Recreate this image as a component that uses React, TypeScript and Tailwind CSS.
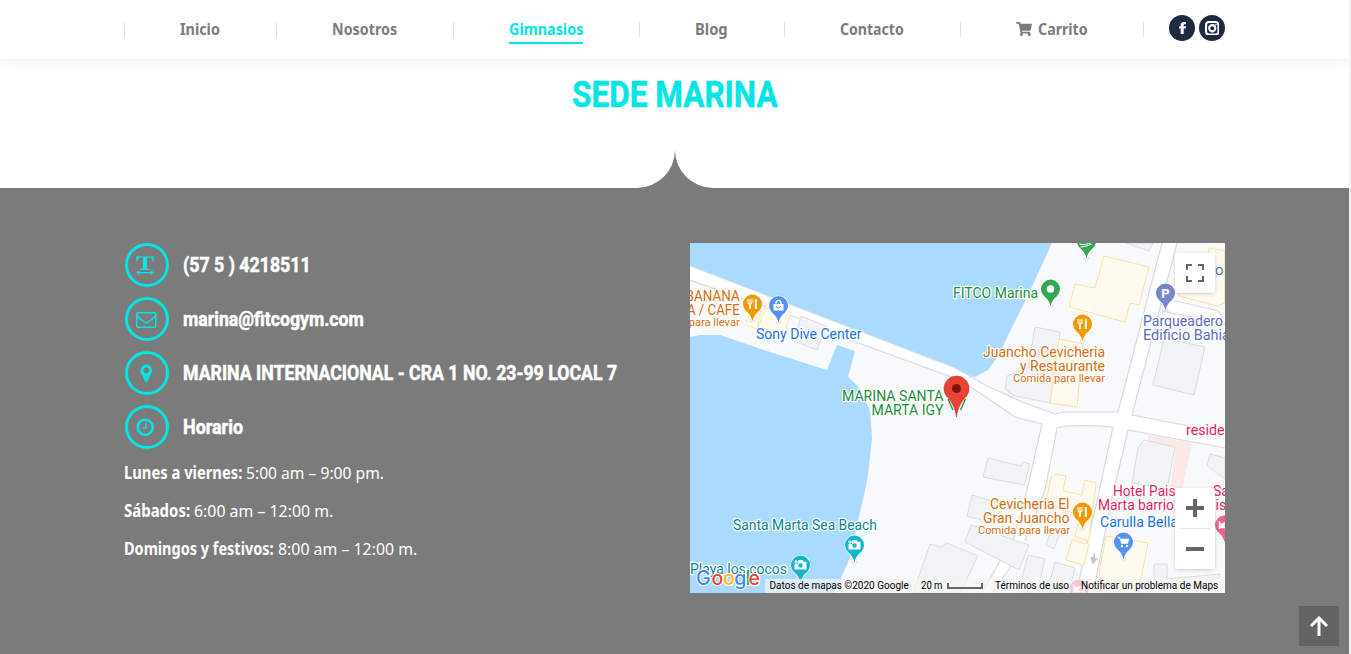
import { useLayoutEffect, useRef, useState, type ReactNode } from 'react';

const CLOCK =
  'M1024 544v448q0 14-9 23t-23 9h-320q-14 0-23-9t-9-23v-64q0-14 9-23t23-9h224v-352q0-14 9-23t23-9h64q14 0 23 9t9 23zm416 352q0-148-73-273t-198-198-273-73-273 73-198 198-73 273 73 273 198 198 273 73 273-73 198-198 73-273zm224 0q0 209-103 385.5t-279.5 279.5-385.5 103-385.5-103-279.5-279.5-103-385.5 103-385.5 279.5-279.5 385.5-103 385.5 103 279.5 279.5 103 385.5z';
const MARKER =
  'M1152 640q0-106-75-181t-181-75-181 75-75 181 75 181 181 75 181-75 75-181zm256 0q0 109-33 179l-364 774q-16 33-47.5 52t-67.5 19-67.5-19-46.5-52l-365-774q-33-70-33-179 0-212 150-362t362-150 362 150 150 362z';
const ENVELOPE =
  'M1664 1504v-768q-32 36-69 66-268 206-426 338-51 43-83 67t-86.5 48.5-102.5 24.5h-2q-48 0-102.5-24.5t-86.5-48.5-83-67q-158-132-426-338-37-30-69-66v768q0 13 9.5 22.5t22.5 9.5h1472q13 0 22.5-9.5t9.5-22.5zm0-1051v-24.5l-.5-13-3-12.5-5.5-9-9-7.5-14-2.5h-1472q-13 0-22.5 9.5t-9.5 22.5q0 168 147 284 193 152 401 317 6 5 35 29.5t46 37.5 44.5 31.5 50.5 27.5 43 9h2q20 0 43-9t50.5-27.5 44.5-31.5 46-37.5 35-29.5q208-165 401-317 54-43 100.5-115.5t46.5-131.5zm128-37v1088q0 66-47 113t-113 47h-1472q-66 0-113-47t-47-113v-1088q0-66 47-113t113-47h1472q66 0 113 47t47 113z';

/** A single line of text, condensed or widened to the given width. */
function Fit({ w, children, className = '' }: { w: number; children: ReactNode; className?: string }) {
  const ref = useRef<HTMLSpanElement>(null);
  const [k, setK] = useState(1);
  useLayoutEffect(() => {
    if (ref.current) setK(w / ref.current.offsetWidth);
  }, [w]);
  return (
    <span className={`block ${className}`} style={{ width: w }}>
      <span ref={ref} className="inline-block origin-left whitespace-nowrap" style={{ transform: `scaleX(${k})` }}>
        {children}
      </span>
    </span>
  );
}

function CartIcon() {
  return (
    <svg viewBox="0 0 576 512" className="h-[14px] w-[16px] fill-[#7b7b7b]">
      <path d="M528.12 301.319l47.273-208C578.806 78.301 567.391 64 551.99 64H159.208l-9.166-44.81C147.758 8.021 137.93 0 126.529 0H24C10.745 0 0 10.745 0 24v16c0 13.255 10.745 24 24 24h69.883l70.248 343.435C147.325 417.1 136 435.222 136 456c0 30.928 25.072 56 56 56s56-25.072 56-56c0-15.674-6.447-29.835-16.824-40h209.647C430.447 426.165 424 440.326 424 456c0 30.928 25.072 56 56 56s56-25.072 56-56c0-22.172-12.888-41.332-31.579-50.405l5.517-24.276c3.413-15.018-8.002-29.319-23.403-29.319H218.117l-6.545-32h293.145c11.206 0 20.92-7.754 23.403-18.681z" />
    </svg>
  );
}

const nav = [
  { label: 'Inicio', slot: 'w-[152px]', w: 40 },
  { label: 'Nosotros', slot: 'w-[177px]', w: 65 },
  { label: 'Gimnasios', slot: 'w-[186px]', w: 74, active: true },
  { label: 'Blog', slot: 'w-[145px]', w: 33 },
  { label: 'Contacto', slot: 'w-[176px]', w: 64 },
  { label: 'Carrito', slot: 'w-[183px]', w: 50, cart: true },
];

function Header() {
  return (
    <header className="relative z-10 flex h-[59px] items-center bg-white pl-[124px] shadow-[0_0_15px_1px_rgba(0,0,0,0.07)]">
      <nav className="flex items-center">
        {nav.map((n) => (
          <a key={n.label} className={`flex h-[15px] items-center border-l border-[#dedede] pl-[55px] ${n.slot}`}>
            {n.cart && (
              <span className="mr-[6px] mb-[2px]">
                <CartIcon />
              </span>
            )}
            <span
              className={
                n.active
                  ? 'border-b-2 border-[#00e5e5] pb-[1px] text-[#00e5e5]'
                  : 'mb-[2px] text-[#7b7b7b]'
              }
            >
              <Fit w={n.w} className="text-[16.5px] leading-[25px] font-bold">
                {n.label}
              </Fit>
            </span>
          </a>
        ))}
      </nav>
      <div className="mb-[3px] flex items-center gap-1">
        <span className="-mr-px mt-[2px] h-[15px] w-[23px] border-l border-[#dedede]" />
        <span className="flex size-[26px] items-center justify-center rounded-full bg-[#1f2a40]">
          <svg viewBox="0 0 7 12" className="h-3 w-[7px] fill-white">
            <path d="M1.700 12V6.600H0V4.300h1.700V3C1.700 1 3 0 5 0h2v2.200H5.700c-.8 0-1 .4-1 1v1.100H7l-.3 2.300h-2V12z" />
          </svg>
        </span>
        <span className="flex size-[26px] items-center justify-center rounded-full bg-[#1f2a40]">
          <svg viewBox="0 0 14 14" className="size-[14.5px] fill-none stroke-white">
            <rect x="1" y="1" width="12" height="12" rx="2.800" strokeWidth="2" />
            <circle cx="7" cy="7" r="3" strokeWidth="2" />
            <circle cx="10.500" cy="3.500" r=".5" strokeWidth=".8" />
          </svg>
        </span>
      </div>
    </header>
  );
}

function TextWidthIcon() {
  return (
    <svg viewBox="0 0 18 19" className="mr-[4px] h-[19px] w-[18px] fill-[#00e5e5]">
      <path d="M.3 0h1l.7.5h14l.7-.5h.9v5.2h-1.1c-.4-2-.9-3.2-2-3.500-1-.2-2.300-.2-3.500-.1v9.800c0 1 .5 1.300 2.700 1.700v1H4.300v-1c2.200-.4 2.700-.7 2.700-1.700V1.600c-1.200-.1-2.500-.1-3.500.1-1.100.3-1.600 1.500-2 3.500H.3z" />
      <path d="M0 16.600 3.300 14v1.900h11.400V14l3.300 2.600-3.300 2.400v-1.700H3.300V19z" />
    </svg>
  );
}

function Glyph({ d, shift = 'mr-[1.5px]' }: { d: string; shift?: string }) {
  return (
    <svg viewBox="0 0 1792 1792" className={`size-[20.5px] fill-[#00e5e5] ${shift}`}>
      <path d={d} />
    </svg>
  );
}

const contacts = [
  { icon: <TextWidthIcon />, text: '(57 5 ) 4218511', w: 127 },
  { icon: <Glyph d={ENVELOPE} />, text: 'marina@fitcogym.com', w: 180 },
  { icon: <Glyph d={MARKER} />, text: 'MARINA INTERNACIONAL - CRA 1 NO. 23-99 LOCAL 7', w: 433 },
  { icon: <Glyph d={CLOCK} shift="mr-[4px]" />, text: 'Horario', w: 59 },
];

const hours = [
  { day: 'Lunes a viernes:', time: '5:00 am – 9:00 pm.', dw: 118, tw: 138 },
  { day: 'Sábados:', time: '6:00 am – 12:00 m.', dw: 66, tw: 139 },
  { day: 'Domingos y festivos:', time: '8:00 am – 12:00 m.', dw: 150, tw: 139 },
];

type Label = { t: string; x: number; y: number; c: string; w?: number; s?: number; end?: boolean };

const ORANGE = '#d56e0c';
const GREEN = '#1e8e3e';
const PINK = '#e01e62';
const labels: Label[] = [
  { t: 'BANANA', x: 49.7, y: 58, c: ORANGE, end: true, w: 54 },
  { t: 'LA / CAFE', x: 49.7, y: 72, c: ORANGE, end: true, w: 60 },
  { t: 'para llevar', x: 49.7, y: 82.5, c: ORANGE, end: true, s: 11, w: 51 },
  { t: 'Sony Dive Center', x: 66, y: 96, c: '#1a73e8', w: 105.5 },
  { t: 'MARINA SANTA', x: 152, y: 158, c: GREEN, w: 101.5 },
  { t: 'MARTA IGY', x: 181.5, y: 172, c: GREEN, w: 72 },
  { t: 'FITCO Marina', x: 263, y: 55, c: GREEN, w: 85 },
  { t: 'Juancho Cevicheria', x: 293, y: 114, c: ORANGE, w: 122 },
  { t: 'y Restaurante', x: 330, y: 128, c: ORANGE, w: 85 },
  { t: 'Comida para llevar', x: 323, y: 139, c: ORANGE, s: 11, w: 92 },
  { t: 'Parqueadero', x: 453, y: 83, c: '#5c6bc0', w: 80 },
  { t: 'Edificio Bahia', x: 453, y: 97, c: '#5c6bc0', w: 87 },
  { t: 'ro', x: 520, y: 32, c: '#5b7b8e', w: 13.5 },
  { t: 'Santa Marta Sea Beach', x: 43, y: 287, c: '#0c8591', w: 144 },
  { t: 'Playa los cocos', x: 0, y: 331, c: '#0c8591', w: 97 },
  { t: 'Cevicheria El', x: 300, y: 266, c: ORANGE, w: 79.5 },
  { t: 'Gran Juancho', x: 293, y: 280, c: ORANGE, w: 86.5 },
  { t: 'Comida para llevar', x: 288, y: 291, c: ORANGE, s: 11, w: 92 },
  { t: 'Hotel Pais', x: 423, y: 253, c: PINK, w: 62.5 },
  { t: 'Sa', x: 523, y: 253, c: PINK },
  { t: 'Marta barrio', x: 408, y: 267, c: PINK, w: 76 },
  { t: 'is', x: 525.5, y: 267, c: PINK },
  { t: 'Carulla Bella', x: 410, y: 284, c: '#1a73e8', w: 78 },
  { t: 'reside', x: 496, y: 192, c: PINK, w: 38.5 },
];

function Pin({ x, y, c, children }: { x: number; y: number; c: string; children?: ReactNode }) {
  return (
    <g transform={`translate(${x} ${y})`}>
      <ellipse cx="0" cy="17" rx="3" ry="1.6" fill="#e3e5e8" />
      <path
        d="M0 17.500C-1.200 12-3.500 9.800-6.500 7A9.500 9.500 0 1 1 6.500 7C3.500 9.800 1.200 12 0 17.500z"
        fill={c}
        stroke="#fff"
        strokeWidth="1.200"
        paintOrder="stroke"
      />
      {children}
    </g>
  );
}

const Fork = () => (
  <g fill="none" stroke="#fff" strokeWidth="1.100">
    <path d="M-4.500-5v3.500q0 1.500 2 1.500t2-1.500V-5M-2.500-5V5" />
    <path d="M3.300-5V5" strokeWidth="2" />
    <path d="M-2.500 0V5" strokeWidth="1.800" />
  </g>
);
const Camera = () => (
  <g>
    <path d="M-2-5h4l1.200 1.700H6V4.500H-6V-1h3.500z" fill="#fff" />
    <circle cx="0" cy=".5" r="2.200" fill="#12b5cb" />
    <path d="M-6.500-3h4M-4.500-5v4" stroke="#fff" strokeWidth="1" />
  </g>
);
const Bed = () => <path d="M-5-4v8M-5 2.500H5V4M5 2.500V-2H-.5v4M-3.500-1h2v2h-2z" fill="none" stroke="#fff" strokeWidth="1.400" />;

function MapDrawing() {
  return (
    <svg viewBox="0 0 535 350" className="block h-[350px] w-[535px]">
      <rect width="535" height="350" fill="#f8f9fb" />
      {/* sea */}
      <g fill="#aadaff">
        <path d="M0 0H362L338 52 308 113 298 127 285 134 278 132 265 125 0 23z" />
        <path d="M0 94 10 92 30 92 83 110 137 127 147 102 165 108 158 134 167 142 172 150 180 167 182 195 178 232 175 248 168 278 160 315 144 350H0z" />
      </g>
      {/* streets */}
      <g fill="#fff">
        <path d="M0 23 265 125 278 132 295 142 332 159 365 171 375 169H428L472 0H487L442 172 535 190V205L438 187 422 255 403 350H386L407 258 423 184 375 183 367 185 355 247 335 298 323 298 337 247 352 181 325 174 290 150 267 136 0 37z" />
        <path d="M478 54 525 66Q534 68 534 76L482 68 474 66z" />
        <path d="M310 318 322 322 302 350H292z" />
      </g>
      <g fill="none" stroke="#d7d9df" strokeWidth="1.200">
        <path d="M0 37 108 75 160 97 267 136 290 150 325 174 352 181 337 247 323 298" />
        <path d="M265 125 278 132 295 142 332 159 365 171 375 169H428L472 0" />
        <path d="M487 0 442 172 535 190M535 205 438 187 422 255 403 350M386 350 407 258 423 184Q380 181 367 185L355 247 335 298" />
        <path d="M482 57 525 67Q534 70 532 78M472 68 535 81M310 318 292 350M322 322 302 350" />
      </g>
      <path d="M0 23 265 125" stroke="#d9e2ea" fill="none" />
      <path d="M458 192 502 200 492 245 480 245 486 203 458 199z" fill="#fce8e6" />
      {/* buildings */}
      <g fill="#f1f3f4" stroke="#dadce0">
        <path d="M111 73 136 83 127 107 104 98z" />
        <path d="M436 0 459 8 463 0z" />
        <path d="M345 84 370 89 361 160 325 153 315 146 317 133 338 125z" />
        <path d="M474 95 515 104 504 152 463 142z" />
        <path d="M454 197 485 204 477 246 442 240 448 205z" />
        <path d="M520 211 535 215V236L517 223z" />
        <path d="M298 215 331 223 333 219 340 221 334 242 293 234z" />
        <path d="M282 252 315 262 303 280 277 273z" />
        <path d="M281 282 339 302 329 327 275 299z" />
        <path d="M240 301 251 304 257 300 288 313 270 350H223z" />
        <path d="M338 312 355 316 347 350H328z" />
        <path d="M365 319 385 325 379 350H357z" />
        <path d="M362 285 372 285 364 306 356 302z" />
        <path d="M464 321H477V336L530 331 524 344H464z" />
      </g>
      <g fill="#fffaf0" stroke="#fde09a">
        <path d="M414 13 459 24 449 62 440 60 435 79 379 64 385 41 405 45z" />
        <path d="M369 96 393 101 387 164 360 160z" />
        <path d="M361 234 365 232 366 231 376 233 373 248 392 252 395 237 406 240 399 298 385 294 390 273 356 259z" />
        <path d="M382 297 399 301 394 322 376 317z" />
        <path d="M416 293 458 300 448 350H414L409 330z" />
        <path d="M519 5 535 8V60L527 63 489 53 495 30 517 30z" />
        <path d="M62 65 71 68 67 86 55 82z" strokeDasharray="3 1" />
        <path d="M77 60 101 69 95 90 68 84z" strokeDasharray="3 1" />
      </g>
      <path d="M405 310v5h3l-5 7-3-8h3l1-4z" fill="#c5c9d6" />
      <Pin x={62.5} y={61} c="#f29900"><Fork /></Pin>
      <Pin x={88.5} y={62.500} c="#5491f5">
        <path d="M-5-1.500H5V5H-5z" fill="#fff" />
        <path d="M-2.500-1v-1.500a2.500 2.500 0 0 1 5 0V-1" fill="none" stroke="#fff" strokeWidth="1.300" />
        <path d="M-2 .5a2 2 0 0 0 4 0" fill="none" stroke="#5491f5" />
      </Pin>
      <Pin x={360.5} y={46} c="#34a853"><circle r="3.800" fill="#fff" /></Pin>
      <Pin x={396.5} y={-2} c="#34a853">
        <path d="M-7 3q5 2 13-2M-6 6q6 0 11-3" stroke="#fff" fill="none" />
      </Pin>
      <Pin x={392.5} y={81} c="#f29900"><Fork /></Pin>
      <Pin x={475.5} y={50} c="#7986cb">
        <text x="0" y="5" textAnchor="middle" fontSize="13" fontWeight="700" fill="#fff">P</text>
      </Pin>
      <Pin x={164.5} y={302} c="#12b5cb"><Camera /></Pin>
      <Pin x={110.5} y={322} c="#12b5cb"><Camera /></Pin>
      <Pin x={392.5} y={269} c="#f29900"><Fork /></Pin>
      <Pin x={433.5} y={299} c="#5491f5">
        <path d="M-6-5h2l2 6.500H4L5.500-3H-3z" fill="#fff" stroke="#fff" strokeWidth=".6" />
        <circle cx="-1.500" cy="4" r="1.200" fill="#fff" />
        <circle cx="3.500" cy="4" r="1.200" fill="#fff" />
      </Pin>
      <Pin x={534.5} y={282} c="#f06292"><Bed /></Pin>
      <Pin x={389} y={346} c="#f06292"><Bed /></Pin>
      <g stroke="#fff" strokeWidth="2.500" strokeLinejoin="round" paintOrder="stroke">
        {labels.map((l, i) => (
          <text
            key={i}
            x={l.x}
            y={l.y}
            fill={l.c}
            fontSize={l.s ?? 14}
            textAnchor={l.end ? 'end' : 'start'}
            textLength={l.w}
            lengthAdjust="spacingAndGlyphs"
          >
            {l.t}
          </text>
        ))}
      </g>
      <path d="M258 156l5 11M275.500 156l-5 11" stroke="#1e8e3e" strokeWidth="1.300" />
      <path
        d="M266.500 174C265 163 261 158.500 256.500 153A12.500 12.500 0 1 1 276.500 153C272 158.500 268 163 266.500 174z"
        fill="#ea4335"
        stroke="#c5372c"
        strokeWidth=".6"
      />
      <circle cx="266.500" cy="145.500" r="4.500" fill="#811411" />
    </svg>
  );
}

function GoogleLogo() {
  return (
    <svg viewBox="0 0 68 26" className="absolute bottom-0 left-[4px] h-[26px] w-[68px]">
      <text
        y="18"
        fontSize="19.500"
        strokeWidth="2"
        stroke="#fff"
        paintOrder="stroke"
        className="font-['Inter',sans-serif] font-medium"
      >
        <tspan x="2" fill="#4285f4">G</tspan>
        <tspan x="17.500" fill="#ea4335">o</tspan>
        <tspan x="29" fill="#fbbc05">o</tspan>
        <tspan x="40.200" fill="#4285f4">g</tspan>
        <tspan x="51.500" fill="#34a853">l</tspan>
        <tspan x="54.500" fill="#ea4335">e</tspan>
      </text>
    </svg>
  );
}

function MapPanel() {
  return (
    <div className="relative h-[350px] w-[535px] overflow-hidden font-['Roboto',sans-serif]">
      <MapDrawing />
      <button className="absolute top-[10px] right-[10px] flex size-10 items-center justify-center rounded-[2px] bg-white shadow-[0_1px_4px_-1px_rgba(0,0,0,0.3)]">
        <svg viewBox="0 0 18 18" className="size-[18px] fill-[#666]">
          <path d="M0 0h6v2H2v4H0zM12 0h6v6h-2V2h-4zM0 12h2v4h4v2H0zM16 12h2v6h-6v-2h4z" />
        </svg>
      </button>
      <div className="absolute right-[10px] bottom-6 flex h-[81px] w-10 flex-col items-center rounded-[2px] bg-white shadow-[0_1px_4px_-1px_rgba(0,0,0,0.3)]">
        <button className="flex h-10 items-center">
          <svg viewBox="0 0 18 18" className="size-[18px] fill-[#666]">
            <path d="M7 0h4v7h7v4h-7v7H7v-7H0V7h7z" />
          </svg>
        </button>
        <span className="h-px w-[30px] bg-[#e6e6e6]" />
        <button className="flex h-10 items-center">
          <span className="h-1 w-[18px] bg-[#666]" />
        </button>
      </div>
      <GoogleLogo />
      <div className="absolute right-0 bottom-0 flex h-[14px] w-[460px] items-center bg-[#f5f5f5]/70 pl-[4.500px] text-[10px] leading-[14px] text-black">
        <Fit w={139}>Datos de mapas ©2020 Google</Fit>
        <Fit w={22} className="ml-3">20 m</Fit>
        <span className="ml-1 h-[6px] w-9 border-x-2 border-b-2 border-[#666]" />
        <Fit w={74} className="ml-[12.5px]">Términos de uso</Fit>
        <Fit w={137} className="ml-3">Notificar un problema de Maps</Fit>
      </div>
    </div>
  );
}

export default function App() {
  return (
    <div className="flex h-[654px] w-[1351px] overflow-hidden bg-[#f1f1f1] font-['Noto_Sans',sans-serif]">
      <div className="relative flex w-[1349px] flex-col overflow-hidden bg-white">
        <Header />
        <div className="flex h-[91px] justify-center pt-[15px]">
          <h1 className="font-['Roboto',sans-serif] text-[36px] leading-[42px] font-bold text-[#00e5e5] [-webkit-text-stroke:0.5px_#00e5e5]">
            <Fit w={206}>SEDE MARINA</Fit>
          </h1>
        </div>
        <svg viewBox="0 0 76 38" className="ml-[637px] h-[38px] w-[76px] shrink-0 fill-[#7b7b7b]">
          <path d="M0 38A38 38 0 0 0 38 0 38 38 0 0 0 76 38z" />
        </svg>
        <main className="flex flex-1 bg-[#7b7b7b] pt-[55px] pl-[124px] text-white">
          <section className="w-[566px]">
            <ul className="flex flex-col gap-[10px] pl-px">
              {contacts.map((c) => (
                <li key={c.text} className="flex items-center gap-[14px]">
                  <span className="flex size-11 items-center justify-center rounded-full border-[3px] border-[#00e5e5]">
                    {c.icon}
                  </span>
                  <Fit
                    w={c.w + 1}
                    className="font-['Roboto',sans-serif] text-[20px] leading-[30px] font-bold [-webkit-text-stroke:0.5px_white]"
                  >
                    {c.text}
                  </Fit>
                </li>
              ))}
            </ul>
            <div className="mt-[10px] flex flex-col gap-[10px] text-[17px] leading-[28px]">
              {hours.map((h) => (
                <p key={h.day} className="flex gap-1">
                  <Fit w={h.dw} className="font-bold">{h.day}</Fit>
                  <Fit w={h.tw}>{h.time}</Fit>
                </p>
              ))}
            </div>
          </section>
          <MapPanel />
        </main>
        <button className="absolute right-[10px] bottom-2 flex size-10 items-center justify-center bg-[#636363]">
          <svg viewBox="0 0 18 20" className="h-5 w-[18px] fill-none stroke-white stroke-3">
            <path d="M9 20V2M1 10 9 2l8 8" />
          </svg>
        </button>
      </div>
    </div>
  );
}
